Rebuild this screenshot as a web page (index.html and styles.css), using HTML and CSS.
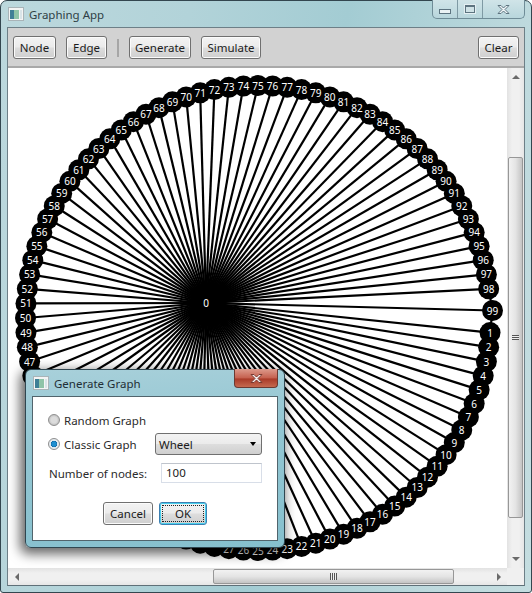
FILE: index.html
```html
<!DOCTYPE html>
<html>
	<head>
		<title>Graphing App</title>
		<link rel="stylesheet" href="styles.css">
	</head>
	<body>
		<div class="window">
			<div class="titlebar">
				<svg class="appicon" width="16" height="14" viewBox="0 0 16 14"><rect x="0.5" y="0.5" width="15" height="13" fill="#f4f4f4" stroke="#a9b4b8"/><rect x="2" y="3" width="4" height="9" fill="#3f7f96"/><rect x="6" y="3" width="5" height="9" fill="#8fc4a8"/><rect x="12" y="3" width="2" height="9" fill="#d9e4e8"/></svg>
				<span class="title">Graphing App</span>
				<div class="caption">
					<div class="capbtn capmin"><span class="minglyph"></span></div>
					<div class="capbtn capmax"><span class="maxglyph"></span></div>
					<div class="capbtn capclose">
						<svg width="15" height="11" viewBox="0 0 15 11"><path d="M2 1.500h3l2.500 2.500 2.500-2.500h3l-4 4 4 4h-3l-2.500-2.500-2.500 2.500h-3l4-4z" fill="#eef4f6" stroke="#5d7480"/></svg>
					</div>
				</div>
			</div>
			<div class="client">
				<div class="toolbar">
					<button class="btn btn-node">Node</button>
					<button class="btn btn-edge">Edge</button>
					<span class="sep"></span>
					<button class="btn btn-gen">Generate</button>
					<button class="btn btn-sim">Simulate</button>
					<button class="btn btn-clear">Clear</button>
				</div>
				<div class="viewer">
					<div class="canvas">
						<svg id="graph" width="500" height="500" viewBox="8 68 500 500"></svg>
					</div>
					<div class="vbar">
						<span class="arrow arrow-up"></span>
						<div class="vtrack"><div class="vthumb"><span class="grip-v"></span></div></div>
						<span class="arrow arrow-down"></span>
					</div>
					<div class="hbar">
						<span class="arrow arrow-left"></span>
						<div class="htrack"><div class="hthumb"><span class="grip-h"></span></div></div>
						<span class="arrow arrow-right"></span>
					</div>
					<div class="corner"></div>
				</div>
			</div>
		</div>

		<div class="dialog">
			<div class="dlgtitle">
				<svg class="appicon" width="16" height="14" viewBox="0 0 16 14"><rect x="0.5" y="0.5" width="15" height="13" fill="#f4f4f4" stroke="#a9b4b8"/><rect x="2" y="3" width="4" height="9" fill="#3f7f96"/><rect x="6" y="3" width="5" height="9" fill="#8fc4a8"/><rect x="12" y="3" width="2" height="9" fill="#d9e4e8"/></svg>
				<span class="title">Generate Graph</span>
				<div class="dlgclose">
					<svg width="15" height="11" viewBox="0 0 15 11"><path d="M2 1.500h3l2.500 2.500 2.500-2.500h3l-4 4 4 4h-3l-2.500-2.500-2.500 2.500h-3l4-4z" fill="#f4eeee" stroke="#7a3a30"/></svg>
				</div>
			</div>
			<div class="dlgbody">
				<div class="row row-random">
					<span class="radio"></span>
					<span class="rlabel">Random Graph</span>
				</div>
				<div class="row row-classic">
					<span class="radio radio-on"></span>
					<span class="rlabel">Classic Graph</span>
					<div class="combo"><span>Wheel</span><span class="combo-arrow"></span></div>
				</div>
				<div class="row row-nodes">
					<span class="nlabel">Number of nodes:</span>
					<div class="textbox">100</div>
				</div>
				<div class="row row-actions">
					<button class="btn btn-cancel">Cancel</button>
					<button class="btn btn-ok"><span class="focus">OK</span></button>
				</div>
			</div>
		</div>
		<script src="script.js"></script>
	</body>
</html>
```
FILE: styles.css
```css
html, body
{
	margin:0;
	padding:0;
	width:532px;
	height:593px;
	overflow:hidden;
	background:#fff;
	font-family:"Noto Sans","Open Sans",sans-serif;
	font-size:11.5px;
	color:#1c1c1c;
}
.window
{
	box-sizing:border-box;
	width:532px;
	height:593px;
	border:1px solid #33464f;
	border-radius:7px 7px 3px 3px;
	background:linear-gradient(100deg,#bcd8dd 0%,#b2d3d9 30%,#a3ccd3 55%,#bfdade 85%,#c4dde0 100%);
	padding:0 6px 6px 6px;
	display:flex;
	flex-direction:column;
}
.titlebar
{
	height:26px;
	display:flex;
	align-items:center;
	position:relative;
	padding-left:1px;
	flex:none;
}
.appicon
{
	flex:none;
}
.title
{
	margin-left:5px;
	color:#2f3f46;
	font-size:11.5px;
}
.caption
{
	position:absolute;
	top:-1px;
	right:0;
	height:18px;
	display:flex;
	border:1px solid #6f8c97;
	border-top:none;
	border-radius:0 0 5px 5px;
	background:linear-gradient(#d0e4e8,#b8d6dc);
}
.capbtn
{
	display:flex;
	align-items:center;
	justify-content:center;
	height:18px;
	border-right:1px solid #7f9aa4;
}
.capmin
{
	width:24px;
}
.capmax
{
	width:24px;
}
.capclose
{
	width:41px;
	border-right:none;
}
.minglyph
{
	width:10px;
	height:3px;
	margin-top:4px;
	background:#eaf2f4;
	border:1px solid #5d7480;
}
.maxglyph
{
	width:8px;
	height:5px;
	border:1px solid #5d7480;
	border-top-width:2px;
	background:#cfe2e6;
	outline:1px solid #e4eff2;
}
.client
{
	flex:1;
	display:flex;
	flex-direction:column;
	border:1px solid #6d7f87;
	border-bottom-color:#5f7078;
	min-height:0;
}
.toolbar
{
	height:40px;
	flex:none;
	box-sizing:border-box;
	background:#d2d2d2;
	border-bottom:2px solid #a9a9a9;
	display:flex;
	align-items:center;
	padding:1px 5px 0 5px;
}
.btn
{
	box-sizing:border-box;
	height:23px;
	padding:0;
	font-family:inherit;
	font-size:11.5px;
	color:#1c1c1c;
	background:linear-gradient(#f3f3f3 0%,#ebebeb 48%,#dddddd 52%,#cfcfcf 100%);
	border:1px solid #707070;
	border-radius:3px;
	box-shadow:inset 0 0 0 1px #fbfbfb;
}
.btn-node
{
	width:43px;
}
.btn-edge
{
	width:41px;
	margin-left:10px;
}
.sep
{
	width:2px;
	height:18px;
	margin:0 10px;
	background:#a6a6a6;
}
.btn-gen
{
	width:62px;
}
.btn-sim
{
	width:60px;
	margin-left:10px;
}
.btn-clear
{
	width:41px;
	margin-left:auto;
}
.viewer
{
	flex:1;
	min-height:0;
	display:grid;
	grid-template-columns:1fr 17px;
	grid-template-rows:1fr 17px;
	background:#fff;
}
.canvas
{
	overflow:hidden;
	min-width:0;
	min-height:0;
}
#graph
{
	display:block;
}
.edge
{
	stroke:#000;
	stroke-width:2.2;
}
.node
{
	fill:#000;
}
.label
{
	fill:#fff;
	font-family:"Noto Sans","Open Sans",sans-serif;
	font-size:10px;
	text-anchor:middle;
	dominant-baseline:central;
}
.vbar
{
	background:linear-gradient(90deg,#e2e2e2,#f0f0f0 30%,#f0f0f0 70%,#e6e6e6);
	display:flex;
	flex-direction:column;
	align-items:center;
}
.hbar
{
	background:linear-gradient(#e2e2e2,#f0f0f0 30%,#f0f0f0 70%,#e6e6e6);
	display:flex;
	align-items:center;
}
.corner
{
	background:#f0f0f0;
}
.vtrack
{
	flex:1;
	width:100%;
	display:flex;
	justify-content:center;
	padding-top:78px;
	padding-bottom:39px;
	box-sizing:border-box;
}
.htrack
{
	flex:1;
	height:100%;
	display:flex;
	align-items:center;
	padding-left:194px;
	padding-right:43px;
	box-sizing:border-box;
}
.vthumb
{
	width:15px;
	box-sizing:border-box;
	border:1px solid #979797;
	border-radius:2px;
	background:linear-gradient(90deg,#f2f2f2,#e4e4e4 50%,#c4c4c4);
	display:flex;
	align-items:center;
	justify-content:center;
}
.hthumb
{
	flex:1;
	height:15px;
	box-sizing:border-box;
	border:1px solid #979797;
	border-radius:2px;
	background:linear-gradient(#f2f2f2,#e4e4e4 50%,#c4c4c4);
	display:flex;
	align-items:center;
	justify-content:center;
}
.grip-v
{
	width:7px;
	height:5px;
	background:repeating-linear-gradient(#555 0 1px,#eee 1px 2px);
}
.grip-h
{
	width:7px;
	height:7px;
	background:repeating-linear-gradient(90deg,#555 0 1px,#eee 1px 2px);
}
.arrow
{
	width:0;
	height:0;
	flex:none;
	border-style:solid;
	border-color:transparent;
}
.arrow-up
{
	margin:7px 0 0;
	border-width:0 4px 4px 4px;
	border-bottom-color:#6a6a6a;
}
.arrow-down
{
	margin:0 0 7px;
	border-width:4px 4px 0 4px;
	border-top-color:#6a6a6a;
}
.arrow-left
{
	margin-left:7px;
	border-width:4px 4px 4px 0;
	border-right-color:#6a6a6a;
}
.arrow-right
{
	margin-right:6px;
	border-width:4px 0 4px 4px;
	border-left-color:#6a6a6a;
}
.dialog
{
	position:absolute;
	left:25px;
	top:369px;
	width:260px;
	height:179px;
	box-sizing:border-box;
	border:1px solid #2f4650;
	border-radius:6px;
	padding:0 6px 6px 6px;
	background:linear-gradient(175deg,#a8d0da 0%,#93c6d2 40%,#86c0ce 100%);
	box-shadow:-3px 4px 12px 2px rgba(0,0,0,0.6);
	display:flex;
	flex-direction:column;
}
.dlgtitle
{
	height:26px;
	flex:none;
	display:flex;
	align-items:center;
	position:relative;
	padding-left:1px;
}
.dlgtitle .title
{
	color:#1f2f36;
}
.dlgclose
{
	position:absolute;
	top:-1px;
	right:0;
	width:42px;
	height:18px;
	display:flex;
	align-items:center;
	justify-content:center;
	border:1px solid #6b3a32;
	border-top:none;
	border-radius:0 0 4px 4px;
	background:linear-gradient(#dd9a8c 0%,#c5604e 50%,#a93a28 55%,#c56a50 100%);
}
.dlgbody
{
	flex:1;
	background:#fff;
	border:1px solid #51646c;
	padding:13px 15px 0 15px;
	display:flex;
	flex-direction:column;
}
.row
{
	display:flex;
	align-items:center;
}
.row-random
{
	height:20px;
}
.row-classic
{
	height:24px;
	margin-top:2px;
}
.row-nodes
{
	height:20px;
	margin-top:7px;
}
.row-actions
{
	margin-top:19px;
	padding-left:55px;
}
.radio
{
	width:10px;
	height:10px;
	flex:none;
	border-radius:50%;
	border:1px solid #8e8e8e;
	background:radial-gradient(circle at 50% 50%,#dcdcdc 0 40%,#c4c4c4 70%,#f0f0f0 100%);
}
.radio-on
{
	background:radial-gradient(circle at 50% 50%,#1f8fd0 0 30%,#0d5f9c 45%,#dfe8ee 50%,#f2f2f2 100%);
}
.rlabel
{
	margin-left:4px;
	width:79px;
	white-space:nowrap;
	color:#2b2b2b;
}
.combo
{
	box-sizing:border-box;
	width:107px;
	height:22px;
	margin-left:12px;
	border:1px solid #707070;
	border-radius:3px;
	background:linear-gradient(#f3f3f3 0%,#ebebeb 48%,#dddddd 52%,#cfcfcf 100%);
	display:flex;
	align-items:center;
	justify-content:space-between;
	padding:0 5px 0 3px;
}
.combo-arrow
{
	width:0;
	height:0;
	border-style:solid;
	border-width:4px 3.500px 0 3.500px;
	border-color:#000 transparent transparent transparent;
}
.nlabel
{
	width:112px;
	margin-left:1px;
	flex:none;
	white-space:nowrap;
	color:#2b2b2b;
}
.textbox
{
	box-sizing:border-box;
	width:101px;
	height:20px;
	border:1px solid #d8dee8;
	border-top-color:#bfc4cc;
	padding-left:4px;
	line-height:18px;
}
.btn-cancel
{
	width:50px;
}
.btn-ok
{
	width:48px;
	margin-left:6px;
	border-color:#3c7fb1;
	box-shadow:inset 0 0 0 1px #48d0ee;
	padding:2px;
}
.focus
{
	display:block;
	height:100%;
	box-sizing:border-box;
	border:1px dotted #222;
	line-height:15px;
}
```
FILE: script.js
```js
// wheel graph: hub plus 99 rim nodes
var svg=document.getElementById("graph");
var NS="http://www.w3.org/2000/svg";
var cx=258,cy=318,r=232.5;
var hub={x:206,y:303};
var nodes=[];
for(var i=1;i<100;i++)
{
	var a=i*3.6*Math.PI/180;
	nodes.push({n:i,x:cx+r*Math.cos(a),y:cy+r*Math.sin(a)});
}
// last one was dragged off the ring a bit
nodes[98].x=492.5;
nodes[98].y=310.5;

function add(tag,attrs,txt)
{
	var el=document.createElementNS(NS,tag);
	for(var k in attrs)el.setAttribute(k,attrs[k]);
	if(txt!=undefined)el.textContent=txt;
	svg.appendChild(el);
}
// the dialog sits on top of these, no label needed
function covered(p)
{
	return p.x>25&&p.x<285&&p.y>369&&p.y<548;
}
nodes.forEach(function(p,i)
{
	var q=nodes[(i+1)%nodes.length];
	add("line",{"class":"edge",x1:hub.x,y1:hub.y,x2:p.x,y2:p.y});
	add("line",{"class":"edge",x1:p.x,y1:p.y,x2:q.x,y2:q.y});
});
add("circle",{"class":"node",cx:hub.x,cy:hub.y,r:10});
nodes.forEach(function(p)
{
	add("circle",{"class":"node",cx:p.x,cy:p.y,r:10.5});
});
nodes.forEach(function(p)
{
	if(!covered(p))add("text",{"class":"label",x:p.x,y:p.y},p.n);
});
add("text",{"class":"label",x:hub.x,y:hub.y},0);
```
